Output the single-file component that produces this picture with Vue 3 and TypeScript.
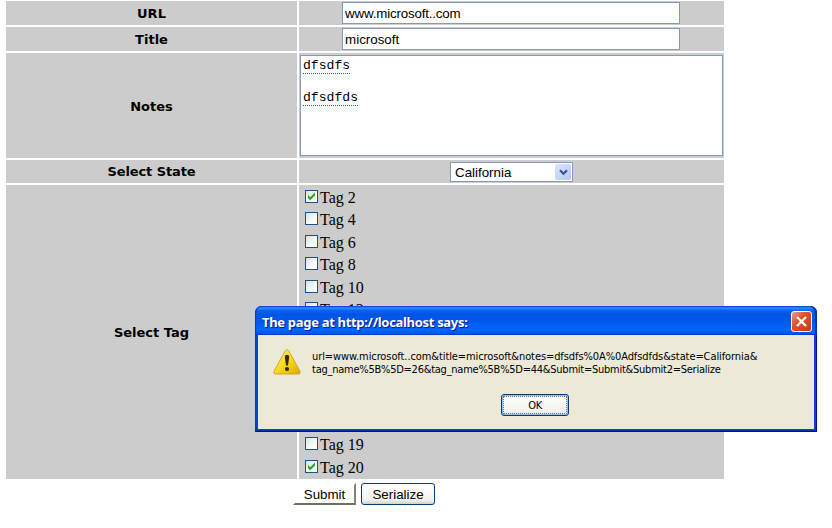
<script setup lang="ts">
import { ref } from 'vue'

interface Tag {
  id: number
  checked: boolean
}

const url = ref('www.microsoft..com')
const title = ref('microsoft')
const state = ref('California')
const noteLines: string[] = ['dfsdfs', '', 'dfsdfds']
const makeTags = (ids: number[]): Tag[] => ids.map((id) => ({ id, checked: id === 2 || id === 20 }))
const tagGroups = ref<Tag[][]>([makeTags([2, 4, 6, 8, 10, 12]), makeTags([19, 20])])
const message: string[] = [
  'url=www.microsoft..com&title=microsoft&notes=dfsdfs%0A%0Adfsdfds&state=California&',
  'tag_name%5B%5D=26&tag_name%5B%5D=44&Submit=Submit&Submit2=Serialize',
]
</script>

<template>
  <main class="page">
    <form class="grid" @submit.prevent>
      <div class="label"><span>URL</span></div>
      <div class="cell"><div class="input"><span class="v-url">{{ url }}</span></div></div>

      <div class="label"><span>Title</span></div>
      <div class="cell"><div class="input"><span>{{ title }}</span></div></div>

      <div class="label"><span>Notes</span></div>
      <div class="cell notes-cell">
        <div class="textarea">
          <div v-for="(line, i) in noteLines" :key="i" class="note-line">
            <span v-if="line" class="misspelt">{{ line }}</span>
          </div>
        </div>
      </div>

      <div class="label state-label"><span class="t-state">Select State</span></div>
      <div class="cell state-cell">
        <div class="select">
          <span class="select-value">{{ state }}</span>
          <span class="select-arrow">
            <svg width="9" height="7" viewBox="0 0 9 7">
              <path d="M1 1.2 L4.5 4.7 L8 1.2" fill="none" stroke="#3d5285" stroke-width="2.1" />
            </svg>
          </span>
        </div>
      </div>

      <div class="label"><span>Select Tag</span></div>
      <div class="cell tags">
        <div v-for="(group, g) in tagGroups" :key="g" class="tag-group">
          <label v-for="tag in group" :key="tag.id" class="tag" @click="tag.checked = !tag.checked">
            <span class="box">
              <svg v-if="tag.checked" width="9" height="9" viewBox="0 0 9 9">
                <path d="M1 3 L3.2 5.2 L8 .6 V3.6 L3.2 8.2 L1 6 Z" fill="#27a027" />
              </svg>
            </span>
            <span class="tag-text">Tag {{ tag.id }}</span>
          </label>
        </div>
      </div>
    </form>

    <div class="actions">
      <button class="submit" type="button"><span>Submit</span></button>
      <button class="serialize" type="button"><span>Serialize</span></button>
    </div>

    <section class="dialog" role="alertdialog">
      <header class="titlebar">
        <span class="dialog-title">The page at http://localhost says:</span>
        <button class="close" type="button">
          <svg width="19" height="19" viewBox="0 0 19 19">
            <path d="M5 5 L14 14 M14 5 L5 14" stroke="#fff" stroke-width="2.3" fill="none" />
          </svg>
        </button>
      </header>
      <div class="dialog-body">
        <div class="message-row">
          <svg class="warning" width="28" height="26" viewBox="0 0 28 26">
            <defs>
              <linearGradient id="warn" x1="0" y1="0" x2="1" y2="1">
                <stop offset="0" stop-color="#fff27a" />
                <stop offset=".5" stop-color="#fbd91c" />
                <stop offset="1" stop-color="#e0a800" />
              </linearGradient>
            </defs>
            <path d="M12.3 1.8 Q14 -.6 15.7 1.8 L27 22.3 Q27.8 25 25.4 25 H2.6 Q.2 25 1 22.3 Z" fill="url(#warn)" stroke="#c9a227" stroke-width=".9" />
            <path d="M11.8 8 Q11.8 5.8 14 5.8 Q16.2 5.8 16.2 8 L15 16.5 H13 Z" fill="#33290b" />
            <ellipse cx="14" cy="20" rx="2.1" ry="1.9" fill="#33290b" />
          </svg>
          <div class="message">
            <div class="m1">{{ message[0] }}</div>
            <div class="m2">{{ message[1] }}</div>
          </div>
        </div>
        <button class="ok" type="button"><span>OK</span></button>
      </div>
    </section>
  </main>
</template>

<style>
body {
  background: #fff;
}
</style>

<style scoped>
.page {
  position: relative;
  box-sizing: border-box;
  width: 832px;
  height: 528px;
  padding: 1px 0 0 6px;
  overflow: hidden;
  color: #000;
}
.page span,
.message div {
  white-space: nowrap;
}
.grid {
  display: grid;
  grid-template-columns: 291px 425px;
  grid-template-rows: 24px 24px 105px 23px 294px;
  gap: 2px;
}
.label,
.cell {
  display: flex;
  box-sizing: border-box;
  align-items: center;
  justify-content: center;
  background: #ccc;
}
.label {
  font: bold 13px/16px 'DejaVu Sans', sans-serif;
  padding: 2px 0 0 0;
}
.state-label {
  padding-top: 0;
}
.t-state {
  letter-spacing: -0.1px;
}
.cell {
  padding-right: 2px;
}
.input {
  box-sizing: border-box;
  width: 338px;
  height: 22px;
  border: 1px solid #7f9db9;
  background: #fff;
  padding: 2px 2px 0 2.6px;
  font: 13.33px/17px 'Liberation Sans', sans-serif;
}
.v-url {
  letter-spacing: -0.17px;
}
.notes-cell {
  align-items: flex-start;
  padding: 2px 0 0;
}
.textarea {
  box-sizing: border-box;
  width: 423px;
  height: 101px;
  border: 1px solid #7f9db9;
  background: #fff;
  padding: 2px 2px 0;
  font: 13.1px/16px 'Liberation Mono', monospace;
}
.note-line {
  height: 16px;
}
.misspelt {
  display: inline-block;
  height: 16px;
  line-height: 15px;
  background: repeating-linear-gradient(90deg, #e01038 0 1px, #fff 1px 2px) 0 100% / 100% 1px no-repeat;
}
.state-cell {
  padding-right: 0;
}
.select {
  box-sizing: border-box;
  display: flex;
  justify-content: space-between;
  width: 123px;
  height: 20px;
  margin-top: 1px;
  border: 1px solid #7f9db9;
  background: #fff;
  padding: 1px;
  font: 13.33px/17px 'Liberation Sans', sans-serif;
}
.select-value {
  padding-left: 3px;
  line-height: 18px;
}
.select-arrow {
  display: flex;
  align-items: center;
  justify-content: center;
  width: 16px;
  height: 16px;
  border-radius: 2px;
  background: linear-gradient(135deg, #dce6fd, #b3c8f8);
}
.tags {
  flex-direction: column;
  align-items: flex-start;
  justify-content: space-between;
  padding: 1px 0 1px 6px;
}
.tag {
  display: flex;
  height: 22px;
  gap: 2px;
}
.tag-group:first-child .tag:nth-child(even),
.tag-group:last-child .tag:nth-child(odd) {
  height: 23px;
}
.box {
  box-sizing: border-box;
  display: flex;
  align-items: center;
  justify-content: center;
  width: 13px;
  height: 13px;
  margin-top: 4px;
  border: 1px solid #1c5180;
  background: linear-gradient(135deg, #dfe0d9, #fff 75%);
}
.tag-text {
  font: 16px/18px 'Liberation Serif', serif;
  padding-top: 3px;
}
.actions {
  display: flex;
  gap: 5px;
  margin: 4px 0 0 287px;
}
.actions button,
.ok {
  box-sizing: border-box;
  margin: 0;
  padding: 0;
  color: #000;
}
.actions button {
  height: 22px;
  padding-top: 1px;
  font: 13.33px/18px 'Liberation Sans', sans-serif;
}
.submit {
  width: 63px;
  border: 2px solid;
  border-color: #fff #85827a #716f64 #fff;
  background: #fff;
}
.actions .serialize {
  width: 74px;
  border: 1px solid #003c74;
  border-radius: 3px;
  background: linear-gradient(#fff, #f3f2ec 80%, #d8d0c4);
}
.dialog {
  position: absolute;
  left: 255px;
  top: 306px;
  box-sizing: border-box;
  width: 562px;
  height: 126px;
  padding: 0 3px 3px;
  border-radius: 7px 7px 0 0;
  background: #0a3fd8;
  box-shadow: inset -1px -1px 0 #00138c, inset 1px 0 0 #0831d9, inset 0 -2px 0 #0831b9;
}
.titlebar {
  display: flex;
  align-items: center;
  justify-content: space-between;
  box-sizing: border-box;
  height: 29px;
  margin: 0 -3px;
  padding: 2px 5px 0 7px;
  border-radius: 7px 7px 0 0;
  background: linear-gradient(#0848c8 0, #2f8cff 7%, #0a64f0 15%, #0054e3 30%, #0058ee 55%, #0066ff 80%, #0060f8 90%, #0043cf 100%);
  box-shadow: inset -2px 0 1px #0831b9, inset 1px 0 1px #0831d9;
}
.dialog-title {
  color: #fff;
  font: bold 13px/18px 'Noto Sans', sans-serif;
  letter-spacing: -0.31px;
  text-shadow: 1px 1px 1px #0f1089;
}
.close {
  box-sizing: border-box;
  display: flex;
  width: 21px;
  height: 21px;
  padding: 0;
  border: 1px solid #fff;
  border-radius: 3px;
  background: linear-gradient(135deg, #f0a088, #e0502c 40%, #c83a12);
}
.dialog-body {
  box-sizing: border-box;
  height: 94px;
  padding: 14px 0 0 15px;
  background: #ece9d8;
}
.message-row {
  display: flex;
  align-items: flex-start;
  height: 45px;
}
.message {
  margin-left: 11px;
  padding-top: 1px;
  font: 11px/13px 'DejaVu Sans Condensed', 'DejaVu Sans', sans-serif;
}
.m1 {
  letter-spacing: -0.09px;
}
.m2 {
  letter-spacing: -0.25px;
}
.ok {
  display: block;
  width: 68px;
  height: 22px;
  margin-left: 228px;
  padding-top: 1px;
  border: 1px solid #003c74;
  border-radius: 3px;
  background: linear-gradient(#fff, #f3f2ec 80%, #e4e0d4);
  box-shadow: inset 0 0 0 1px #9db9eb;
  font: 11px/18px 'DejaVu Sans Condensed', 'DejaVu Sans', sans-serif;
  outline: 1px dotted #5577a8;
  outline-offset: -3px;
}
.ok span {
  letter-spacing: -0.5px;
}
</style>
